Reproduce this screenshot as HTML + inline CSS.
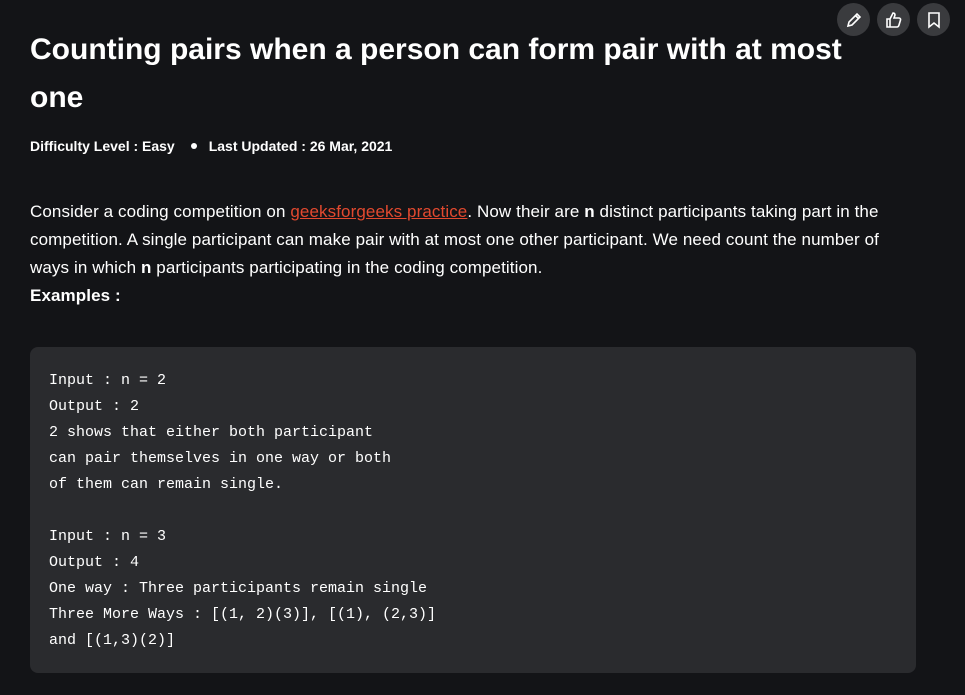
<!DOCTYPE html>
<html><head><style>
body{margin:0;background:#131417;width:965px;height:695px;overflow:hidden;font-family:"Liberation Sans",sans-serif;color:#fff;position:relative}
.icons{position:absolute;top:3px;right:15px;display:flex;gap:7px}
.ic{width:33px;height:33px;border-radius:50%;background:#3a3b3e;display:flex;align-items:center;justify-content:center}
h1{position:absolute;left:30px;top:26px;margin:0;font-size:30px;font-weight:bold;line-height:48px;width:900px;white-space:nowrap}
.meta{position:absolute;left:30px;top:138px;font-size:14px;font-weight:bold}
.meta .dot{display:inline-block;width:6px;height:6px;border-radius:50%;background:#fff;margin:0 12px 2px 16px;vertical-align:middle}
.body{position:absolute;left:30px;top:198px;width:900px;font-size:17px;line-height:28px;letter-spacing:0.1px;white-space:nowrap}
.body a{color:#e2492f;text-decoration:underline}
pre{position:absolute;left:30px;top:347px;width:886px;height:326px;margin:0;box-sizing:border-box;background:#2a2b2e;border-radius:8px;padding:21px 19px;font-family:"Liberation Mono",monospace;font-size:15px;line-height:26px;color:#fff}
</style></head><body>
<div class="icons">
<div class="ic"><svg width="20" height="20" viewBox="0 0 20 20" fill="none" stroke="#fff" stroke-width="1.6"><path d="M4 16l1-4L13 4l3 3-8 8-4 1z M11.5 5.5l3 3"/></svg></div>
<div class="ic"><svg width="20" height="20" viewBox="0 0 20 20" fill="none" stroke="#fff" stroke-width="1.6"><path d="M3 9h3v8H3z M6 9l3-6c1.5 0 2 1 2 2l-1 3h5c1 0 1.8 1 1.5 2l-1.5 5c-.3 1-1 2-2 2H6"/></svg></div>
<div class="ic"><svg width="20" height="20" viewBox="0 0 20 20" fill="none" stroke="#fff" stroke-width="1.6"><path d="M5 3h10v14l-5-4-5 4z"/></svg></div>
</div>
<h1>Counting pairs when a person can form pair with at most<br>one</h1>
<div class="meta">Difficulty Level : Easy<span class="dot"></span>Last Updated : 26 Mar, 2021</div>
<div class="body">Consider a coding competition on <a>geeksforgeeks practice</a>. Now their are <b>n</b> distinct participants taking part in the<br>competition. A single participant can make pair with at most one other participant. We need count the number of<br>ways in which <b>n</b> participants participating in the coding competition.<br><b>Examples :</b></div>
<pre>Input : n = 2
Output : 2
2 shows that either both participant
can pair themselves in one way or both
of them can remain single.

Input : n = 3
Output : 4
One way : Three participants remain single
Three More Ways : [(1, 2)(3)], [(1), (2,3)]
and [(1,3)(2)]</pre>
</body></html>
